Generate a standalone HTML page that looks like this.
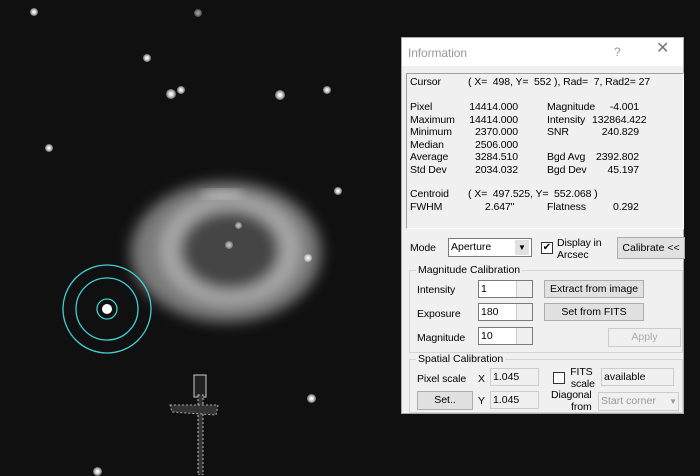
<!DOCTYPE html>
<html><head><meta charset="utf-8"><style>
*{margin:0;padding:0;box-sizing:border-box}
body{width:700px;height:475px;background:#101010;position:relative;overflow:hidden;font-family:"Liberation Sans",sans-serif;font-size:10.5px;color:#000}
.a{position:absolute;white-space:nowrap}
.star{position:absolute;border-radius:50%;background:radial-gradient(circle,#fff 0,#ddd 30%,rgba(200,200,200,0) 100%)}
#dlg{position:absolute;left:401px;top:37px;width:283px;height:377px;background:#f0f0f0;border:1px solid #aaa}
.t{position:absolute;white-space:nowrap;line-height:12px;letter-spacing:-0.1px}
.btn{position:absolute;background:#e1e1e1;border:1px solid #adadad;text-align:center;line-height:16px}
.inp{position:absolute;background:#fff;border:1px solid #7a7a7a;padding-left:2px;line-height:16px}
.dis{background:#f0f0f0;border-color:#ccc;color:#999}
.spin{position:absolute;right:0;top:0;width:16px;height:100%;background:#f0f0f0;border-left:1px solid #ccc}
.grp{position:absolute;border:1px solid #d5d5d5}
.leg{position:absolute;top:-7px;left:6px;background:#f0f0f0;padding:0 2px;line-height:12px}
</style></head><body>
<svg width="400" height="475" style="position:absolute;left:0;top:0">
<defs>
<filter id="bl" x="-30%" y="-30%" width="160%" height="160%"><feGaussianBlur stdDeviation="7"/></filter>
<filter id="bl2"><feGaussianBlur stdDeviation="5"/></filter>
</defs>
<g filter="url(#bl)">
<ellipse cx="226" cy="252" rx="95" ry="70" fill="#7a7a7a"/>
<ellipse cx="230" cy="250" rx="70" ry="55" fill="#a8a8a8"/>
<ellipse cx="230" cy="250" rx="50" ry="40" fill="#444"/>
</g>
<ellipse cx="222" cy="194" rx="22" ry="5" fill="#ccc" filter="url(#bl2)" opacity=".6"/>
<circle cx="107" cy="309" r="10" fill="none" stroke="#3fd0d4" stroke-width="1.3"/>
<circle cx="107" cy="309" r="31" fill="none" stroke="#3fd0d4" stroke-width="1.3"/>
<circle cx="107" cy="309" r="44" fill="none" stroke="#3fd0d4" stroke-width="1.3"/>
<circle cx="107" cy="309" r="5" fill="#fff"/>
<rect x="194" y="375" width="12" height="22" fill="#222" stroke="#ccc" stroke-width="1"/>
<rect x="198" y="395" width="5" height="80" fill="#333" stroke="#bbb" stroke-width="1" stroke-dasharray="2 2"/>
<path d="M170 405 L218 405 L216 415 L172 412Z" fill="#333" stroke="#aaa" stroke-dasharray="2 2"/>
</svg>
<div class="star" style="left:30px;top:8px;width:8px;height:8px"></div>
<div class="star" style="left:194px;top:9px;width:8px;height:8px;opacity:.6"></div>
<div class="star" style="left:143px;top:54px;width:8px;height:8px"></div>
<div class="star" style="left:166px;top:89px;width:10px;height:10px"></div>
<div class="star" style="left:177px;top:86px;width:8px;height:8px"></div>
<div class="star" style="left:275px;top:90px;width:10px;height:10px"></div>
<div class="star" style="left:323px;top:86px;width:8px;height:8px"></div>
<div class="star" style="left:45px;top:144px;width:8px;height:8px"></div>
<div class="star" style="left:334px;top:187px;width:8px;height:8px"></div>
<div class="star" style="left:307px;top:394px;width:9px;height:9px"></div>
<div class="star" style="left:93px;top:467px;width:9px;height:9px"></div>
<div class="star" style="left:225px;top:241px;width:8px;height:8px;opacity:.7"></div>
<div class="star" style="left:235px;top:222px;width:7px;height:7px;opacity:.7"></div>
<div class="star" style="left:304px;top:254px;width:8px;height:8px"></div>
<div id="dlg">
<div class="a" style="left:0;top:0;width:281px;height:28px;background:#fff"></div>
<div class="t" style="left:6px;top:9px;font-size:12px;color:#999">Information</div>
<div class="t" style="left:212px;top:8px;font-size:12px;color:#999">?</div>
<div class="t" style="left:254px;top:5px;font-size:16px;color:#777">✕</div>
<div class="a" style="left:4px;top:35px;width:278px;height:156px;border:1px solid #a0a0a0;border-right-color:#fff;border-bottom-color:#fff"></div>
<div class="t" style="left:8px;top:38px">Cursor</div><div class="t" style="left:66px;top:38px">( X=&nbsp; 498, Y=&nbsp; 552 ), Rad=&nbsp; 7, Rad2= 27</div>
<div class="t" style="left:8px;top:63px;line-height:12.5px">Pixel<br>Maximum<br>Minimum<br>Median<br>Average<br>Std Dev</div>
<div class="t" style="left:66px;top:63px;line-height:12.5px;width:50px;text-align:right">14414.000<br>14414.000<br>2370.000<br>2506.000<br>3284.510<br>2034.032</div>
<div class="t" style="left:145px;top:63px;line-height:12.5px">Magnitude<br>Intensity<br>SNR<br><br>Bgd Avg<br>Bgd Dev</div>
<div class="t" style="left:190px;top:63px;line-height:12.5px;width:47px;text-align:right">-4.001<br>132864.422<br>240.829<br><br>2392.802<br>45.197</div>
<div class="t" style="left:8px;top:150px;line-height:12.5px">Centroid<br>FWHM</div>
<div class="t" style="left:66px;top:150px;line-height:12.5px">( X=&nbsp; 497.525, Y=&nbsp; 552.068 )<br>&nbsp;&nbsp;&nbsp;&nbsp;&nbsp;&nbsp;2.647"</div>
<div class="t" style="left:145px;top:163px">Flatness</div><div class="t" style="left:211px;top:163px">0.292</div>
<div class="t" style="left:8px;top:204px">Mode</div>
<div class="inp" style="left:46px;top:200px;width:84px;height:19px">Aperture<span style="position:absolute;right:2px;top:1px;width:14px;height:15px;background:#e1e1e1;font-size:8px;text-align:center">▼</span></div>
<div class="a" style="left:139px;top:204px;width:12px;height:12px;background:#fff;border:1px solid #333;font-size:10px;line-height:10px;text-align:center">✔</div>
<div class="t" style="left:155px;top:199px">Display in<br>Arcsec</div>
<div class="btn" style="left:215px;top:199px;width:68px;height:22px;line-height:20px">Calibrate &lt;&lt;</div>
<div class="grp" style="left:7px;top:232px;width:274px;height:83px"><div class="leg">Magnitude Calibration</div></div>
<div class="t" style="left:15px;top:246px">Intensity</div>
<div class="inp" style="left:76px;top:242px;width:55px;height:18px">1<div class="spin"></div></div>
<div class="t" style="left:15px;top:270px">Exposure</div>
<div class="inp" style="left:76px;top:265px;width:55px;height:18px">180<div class="spin"></div></div>
<div class="t" style="left:15px;top:294px">Magnitude</div>
<div class="inp" style="left:76px;top:289px;width:55px;height:18px">10<div class="spin"></div></div>
<div class="btn" style="left:142px;top:242px;width:100px;height:18px">Extract from image</div>
<div class="btn" style="left:142px;top:265px;width:100px;height:18px">Set from FITS</div>
<div class="btn" style="left:206px;top:290px;width:73px;height:19px;color:#aaa;border-color:#ccc;background:#f0f0f0">Apply</div>
<div class="grp" style="left:7px;top:321px;width:274px;height:54px"><div class="leg">Spatial Calibration</div></div>
<div class="t" style="left:15px;top:335px">Pixel scale</div>
<div class="t" style="left:76px;top:335px">X</div>
<div class="inp dis" style="left:88px;top:330px;width:49px;height:18px;color:#000">1.045</div>
<div class="a" style="left:151px;top:334px;width:12px;height:12px;background:#fff;border:1px solid #333"></div>
<div class="t" style="left:166px;top:328px;text-align:center">FITS<br>&nbsp;scale</div>
<div class="inp dis" style="left:199px;top:330px;width:73px;height:18px;color:#000">available</div>
<div class="btn" style="left:15px;top:353px;width:56px;height:19px">Set..</div>
<div class="t" style="left:76px;top:357px">Y</div>
<div class="inp dis" style="left:88px;top:353px;width:49px;height:18px;color:#000">1.045</div>
<div class="t" style="left:149px;top:351px;text-align:right">Diagonal<br>from</div>
<div class="inp dis" style="left:196px;top:354px;width:81px;height:19px">Start corner<span style="position:absolute;right:1px;top:1px;font-size:8px">▼</span></div>
</div>
</body></html>
